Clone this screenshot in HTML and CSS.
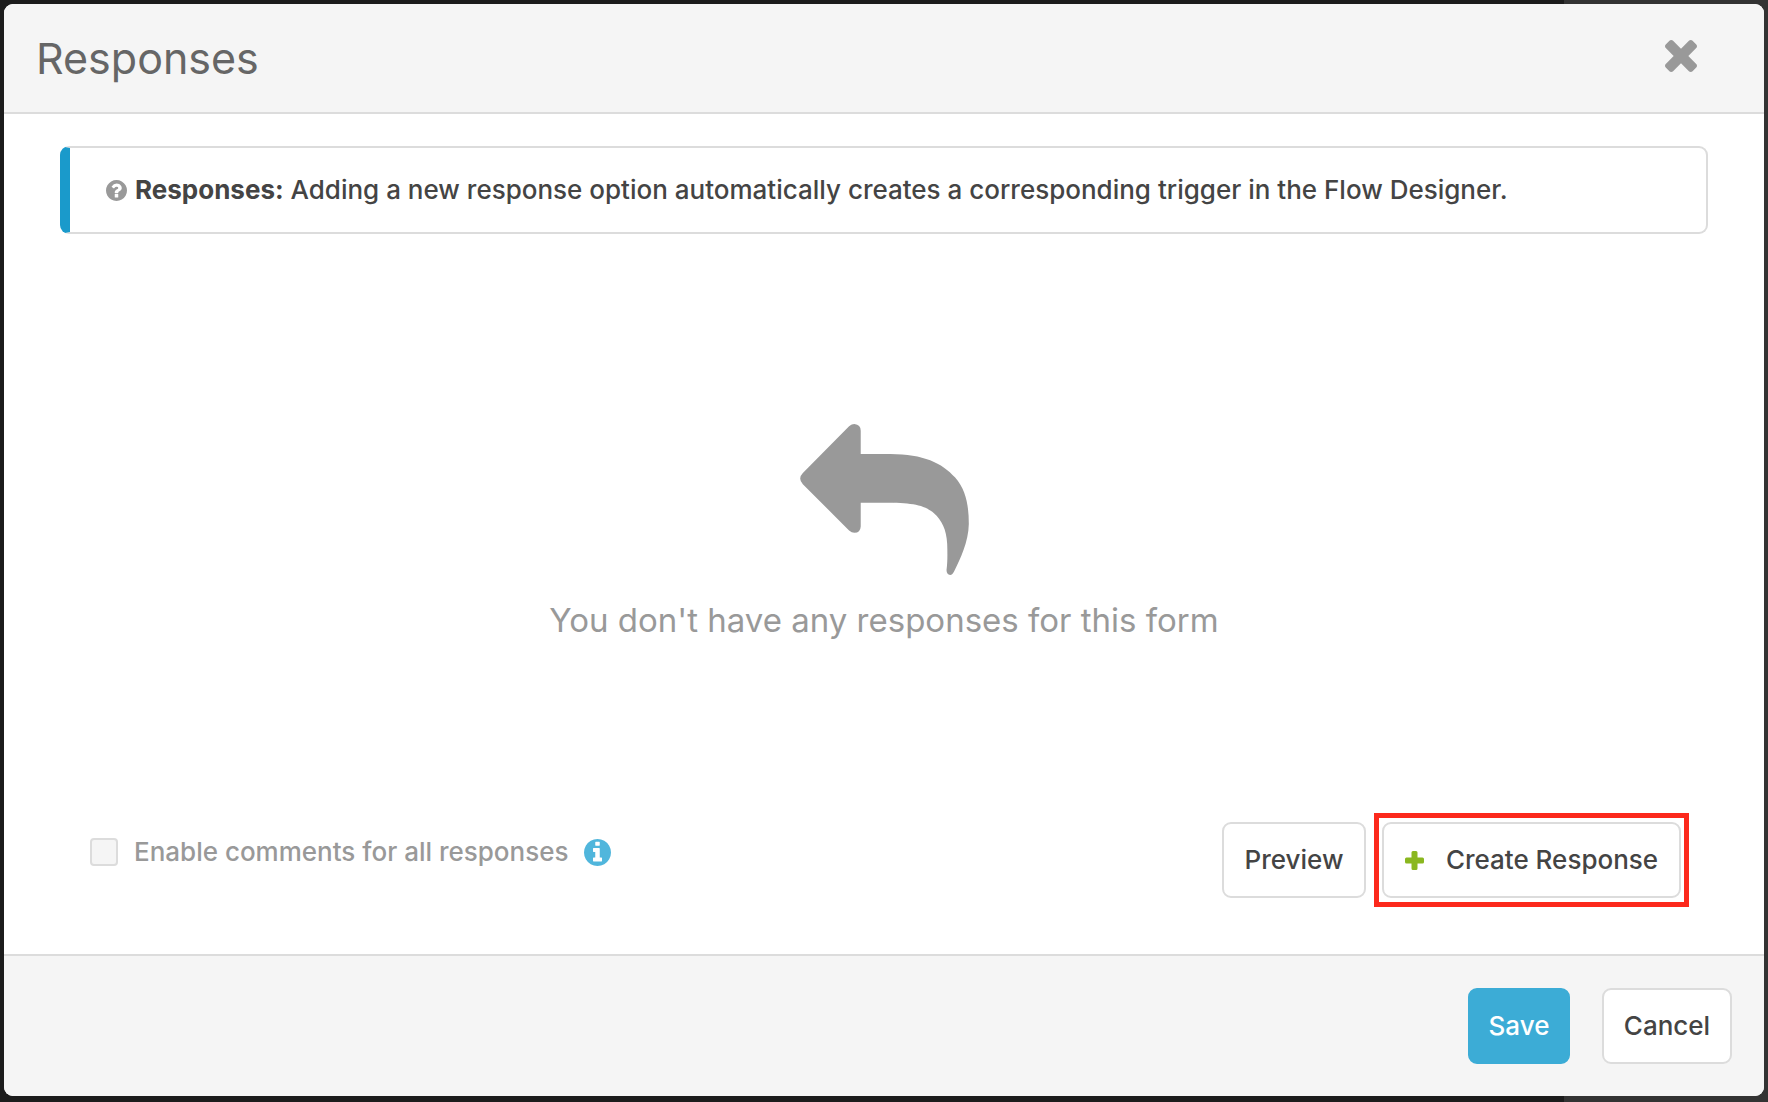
FILE: index.html
```html
<!DOCTYPE html>
<html lang="en">
<head>
<meta charset="utf-8">
<title>Responses</title>
<link rel="stylesheet" href="styles.css">
</head>
<body>
<section class="modal" role="dialog" aria-labelledby="modal-title">
  <header class="modal-header">
    <h1 class="modal-title" id="modal-title">Responses</h1>
    <button class="close" type="button" aria-label="Close">
      <svg class="close-icon" viewBox="302 366 1188 1188" aria-hidden="true"><path d="M1490 1322q0 40-28 68l-136 136q-28 28-68 28t-68-28l-294-294-294 294q-28 28-68 28t-68-28l-136-136q-28-28-28-68t28-68l294-294-294-294q-28-28-28-68t28-68l136-136q28-28 68-28t68 28l294 294 294-294q28-28 68-28t68 28l136 136q28 28 28 68t-28 68l-294 294 294 294q28 28 28 68z"/></svg>
    </button>
  </header>
  <main class="modal-body">
    <div class="notice">
      <svg class="help-icon" viewBox="128 128 1536 1536" aria-hidden="true"><path d="M1024 1376v-192q0-14-9-23t-23-9h-192q-14 0-23 9t-9 23v192q0 14 9 23t23 9h192q14 0 23-9t9-23zm256-672q0-88-55.500-163t-138.500-116-170-41q-243 0-371 213-15 24 8 42l132 100q7 6 19 6 16 0 25-12 53-68 86-92 34-24 86-24 48 0 85.500 26t37.500 59q0 38-20 61t-68 45q-63 28-115.500 86.500t-52.500 125.500v36q0 14 9 23t23 9h192q14 0 23-9t9-23q0-19 21.500-49.500t54.500-49.500q32-18 49-28.500t46-35 44.500-48 28-60.500 12.500-81zm384 192q0 209-103 385.500t-279.500 279.500-385.500 103-385.500-103-279.500-279.500-103-385.500 103-385.500 279.500-279.500 385.500-103 385.500 103 279.500 279.500 103 385.500z"/></svg>
      <p class="notice-text"><strong>Responses:</strong> Adding a new response option automatically creates a corresponding trigger in the Flow Designer.</p>
    </div>
    <div class="empty">
      <svg class="reply-icon" viewBox="59 69 507 454" aria-hidden="true"><path d="M206 76Q214 69 222 69Q241 71 241 89V159H330C430 160 485 185 525 230C558 268 566 315 566 370C565 425 540 475 522 512Q517 523 510 523Q499 522 499 508C502 485 502 460 501 430C499 385 484 358 462 338C430 309 385 306 300 306H241V377Q240 396 222 396Q214 396 206 389L67 250Q59 242 59 233Q59 224 67 216Z"/></svg>
      <p class="empty-text">You don't have any responses for this form</p>
    </div>
    <div class="toolbar">
      <div class="comments">
        <input class="checkbox" type="checkbox" id="comments" disabled>
        <label for="comments">Enable comments for all responses</label>
        <svg class="info-icon" viewBox="128 128 1536 1536" aria-hidden="true"><path d="M1152 1376v-160q0-14-9-23t-23-9h-96v-512q0-14-9-23t-23-9h-320q-14 0-23 9t-9 23v160q0 14 9 23t23 9h96v320h-96q-14 0-23 9t-9 23v160q0 14 9 23t23 9h448q14 0 23-9t9-23zm-128-896v-160q0-14-9-23t-23-9h-192q-14 0-23 9t-9 23v160q0 14 9 23t23 9h192q14 0 23-9t9-23zm640 416q0 209-103 385.500t-279.500 279.500-385.500 103-385.500-103-279.500-279.500-103-385.500 103-385.500 279.500-279.500 385.500-103 385.500 103 279.500 279.500 103 385.500z"/></svg>
      </div>
      <div class="actions">
        <button class="button preview" type="button">Preview</button>
        <div class="highlight">
          <button class="button create" type="button">
            <svg class="plus-icon" viewBox="0 0 19 19" aria-hidden="true"><path d="M8 0h3q1.500 0 1.500 1.500v5h5q1.500 0 1.500 1.500v3q0 1.500-1.500 1.500h-5v5q0 1.500-1.500 1.500h-3q-1.500 0-1.500-1.500v-5h-5q-1.500 0-1.500-1.500v-3q0-1.500 1.500-1.500h5v-5q0-1.500 1.500-1.500z"/></svg>
            Create Response
          </button>
        </div>
      </div>
    </div>
  </main>
  <footer class="modal-footer">
    <button class="button save" type="button">Save</button>
    <button class="button cancel" type="button">Cancel</button>
  </footer>
</section>
</body>
</html>
```
FILE: styles.css
```css
* {
  box-sizing: border-box;
}

body {
  display: flex;
  min-height: 100vh;
  margin: 0;
  padding: 4px 4px 6px;
  background: linear-gradient(to left, #333 204px, #1c1c1c 204px);
  color: #444;
  font: 500 26px/32px Inter, "Open Sans", sans-serif;
}

h1,
p {
  margin: 0;
}

.modal {
  display: flex;
  flex: 1;
  flex-direction: column;
  overflow: hidden;
  border-radius: 9px;
  background: #fff;
}

.modal-header {
  display: flex;
  align-items: center;
  justify-content: space-between;
  height: 110px;
  padding: 0 67px 0 32px;
  border-bottom: 2px solid #dcdcdc;
  background: #f5f5f5;
}

.modal-title {
  color: #666;
  font-size: 43px;
  font-weight: 400;
  line-height: 52px;
}

.close {
  padding: 0 0 5px;
  border: 0;
  background: none;
}

svg {
  display: block;
  flex: none;
}

.close-icon {
  width: 32px;
  height: 32px;
  fill: #999;
}

.modal-body {
  display: flex;
  flex: 1;
  flex-direction: column;
  padding: 32px 56px 47px;
}

.notice {
  display: flex;
  align-items: center;
  gap: 8px;
  padding: 26px 36px;
  border: 2px solid #dcdcdc;
  border-left: 10px solid #1a9acb;
  border-radius: 9px;
}

.help-icon {
  width: 21px;
  height: 21px;
  fill: #999;
}

.empty {
  display: flex;
  flex: 1;
  flex-direction: column;
  align-items: center;
  justify-content: center;
  gap: 25px;
  padding-top: 16px;
  color: #999;
}

.reply-icon {
  width: 169px;
  height: 151px;
  fill: #999;
}

.empty-text {
  font-size: 33px;
  font-weight: 400;
  line-height: 40px;
}

.toolbar {
  display: flex;
  align-items: center;
  justify-content: space-between;
  padding: 0 19px 0 30px;
}

.comments {
  display: flex;
  align-items: center;
  gap: 16px;
  padding-bottom: 16px;
  color: #999;
}

.checkbox {
  width: 28px;
  height: 28px;
  margin: 0;
  border: 2px solid #dcdcdc;
  border-radius: 4px;
  background: #f5f5f5;
  appearance: none;
}

.info-icon {
  width: 27px;
  height: 27px;
  fill: #50b6dc;
}

.actions {
  display: flex;
  align-items: center;
  gap: 8px;
}

.highlight {
  padding: 4px 3px;
  border: 5px solid #fc291c;
}

.button {
  display: flex;
  align-items: center;
  justify-content: center;
  height: 76px;
  padding: 0;
  border: 2px solid #dcdcdc;
  border-radius: 9px;
  background: #fff;
  color: #444;
  font: inherit;
}

.preview {
  width: 144px;
}

.create {
  gap: 22px;
  width: 299px;
}

.plus-icon {
  width: 19px;
  height: 19px;
  fill: #8ab71f;
}

.modal-footer {
  display: flex;
  justify-content: flex-end;
  gap: 32px;
  padding: 32px;
  border-top: 2px solid #dcdcdc;
  background: #f5f5f5;
}

.save {
  width: 102px;
  border-color: #3cacd6;
  background: #3cacd6;
  color: #fff;
}

.cancel {
  width: 130px;
}
```
